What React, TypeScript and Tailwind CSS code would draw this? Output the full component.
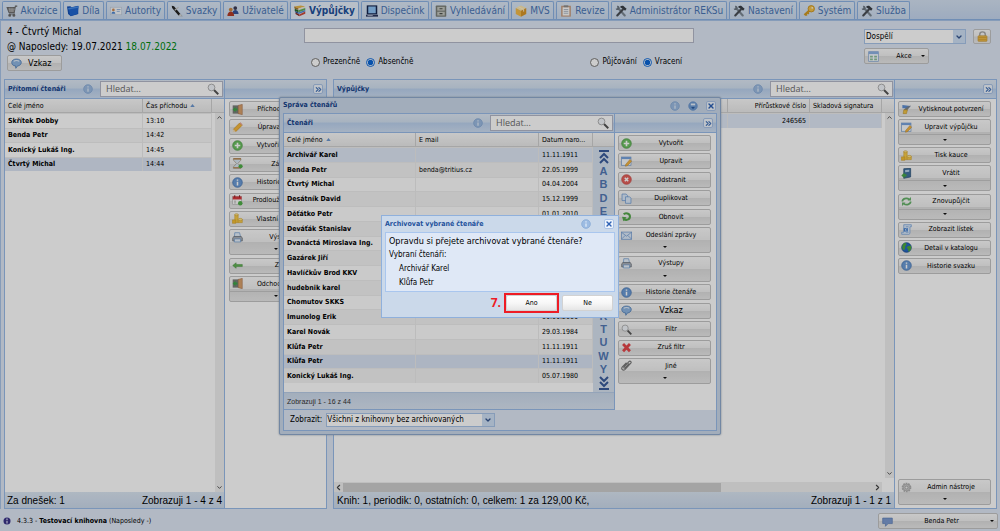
import React from "react";
import { ChevronDown, ChevronLeft, ChevronRight, ChevronsRight, ChevronUp, X } from "lucide-react";

const glyphs: Record<string, React.ReactNode> = {
  cart: (
    <g fill="none" stroke="#6d6d6d" strokeWidth="1.4">
      <path d="M15 1.500h-2.500L11 10H4L1.500 3.500H12" fill="#8c8c8c" />
      <path d="M4 5.500h8M5 8h6M5 3.500v6M8 3.500v6" stroke="#d0d0d0" strokeWidth="0.6" />
      <path d="M4 12h8" />
      <circle cx="5" cy="13.500" r="1.300" fill="#555" />
      <circle cx="10.500" cy="13.500" r="1.300" fill="#555" />
    </g>
  ),
  folder: (
    <g>
      <path d="M0 2l4.500-.5L6 3l9-2v11L5 15 1.500 12z" fill="#1550b4" />
      <path d="M1.500 4L15.500 1.500 14 12 4.500 14.500z" fill="#1e66d0" />
      <path d="M1.500 4L15.500 1.500l-.3 2L2 6z" fill="#4b8fe8" />
    </g>
  ),
  card: (
    <g>
      <rect x="0.500" y="3" width="15" height="10" fill="#f2f5f9" stroke="#c3cedd" />
      <circle cx="4.500" cy="6.500" r="1.800" fill="#d08b52" />
      <path d="M2 11.500c0-3.500 5-3.500 5 0z" fill="#4c86d0" />
      <path d="M9 6h5M9 8.500h4" stroke="#7aa0d4" />
    </g>
  ),
  pen: (
    <g>
      <path d="M1 1l3 .5 8.500 10.500-2.500 2L1.500 4z" fill="#222" />
      <path d="M10 14l2.500-2L15 15z" fill="#f3f3f3" stroke="#888" strokeWidth="0.5" />
      <path d="M5 7l5-4" stroke="#c8c8c8" strokeWidth="1.500" />
    </g>
  ),
  users: (
    <g>
      <circle cx="11" cy="4" r="2.500" fill="#3d3d57" />
      <path d="M7 12c0-7 8-7 8.500 0z" fill="#35549c" />
      <circle cx="5" cy="6" r="2.500" fill="#c98643" />
      <path d="M.5 14.500c0-8 9-8 9 0z" fill="#b23b26" />
    </g>
  ),
  books: (
    <g>
      <path d="M0 2l9-1.500 6 1.500-9 2.500z" fill="#e8b64a" />
      <path d="M0 2l6 2.500v2L1 5z" fill="#a8742a" />
      <path d="M6 4.500L15 2v2L6 7z" fill="#f0e8d8" />
      <path d="M1 5l5 2v2.500L1 8z" fill="#2d6b2d" />
      <path d="M6 7l9-3v2.500L6 9.500z" fill="#62b05a" />
      <path d="M1 8l5 2v2l-4-2z" fill="#23508f" />
      <path d="M6 10l9-3.500v2L6 12z" fill="#4f8ad6" />
      <path d="M2 10l5 2.500V15l-5-3z" fill="#8a2a20" />
      <path d="M7 12.500l8-4v3L7 15z" fill="#cb4a3a" />
    </g>
  ),
  monitor: (
    <g>
      <rect x="1" y="0.500" width="14" height="12" fill="#16264f" />
      <rect x="3" y="2" width="10" height="9" fill="#8fc4f5" />
      <path d="M0 13h16v2.500H0z" fill="#2a355c" />
      <path d="M2 14h7" stroke="#c9d2ea" />
    </g>
  ),
  cabinet: (
    <g>
      <rect x="1" y="0.500" width="14" height="15" rx="1" fill="#7b7f78" />
      <rect x="3" y="2.500" width="10" height="5" fill="#c3c6bf" />
      <rect x="3" y="9" width="10" height="5" fill="#c3c6bf" />
      <path d="M6 5h4M6 11.500h4" stroke="#4d504b" strokeWidth="1.500" />
    </g>
  ),
  cube: (
    <g>
      <path d="M8 .5l7 3.500-7 3.500L1 4z" fill="#fce7b0" />
      <path d="M1 4l7 3.500v8L1 12z" fill="#f3bb4a" />
      <path d="M15 4L8 7.500v8l7-3.500z" fill="#d8962a" />
      <path d="M4.500 2.300l7 3.500v3" stroke="#fff3d0" strokeWidth="1.200" fill="none" />
    </g>
  ),
  clipboard: (
    <g>
      <rect x="1.500" y="1" width="13" height="14.500" fill="#c9a084" />
      <rect x="3.500" y="3" width="9" height="11" fill="#fafafa" />
      <rect x="5" y="0.500" width="6" height="2.500" fill="#8d8d8d" />
      <path d="M5 6h6M5 8.500h6M5 11h6" stroke="#9aa6b5" />
    </g>
  ),
  tools: (
    <g strokeLinecap="round">
      <path d="M4 4l9 10" stroke="#7d8994" strokeWidth="2.800" />
      <path d="M1 4.500C1 7.500 5 7.500 6 5S4 0 2.500 1.500L4 3.500 3 4.500z" fill="#6c7681" />
      <path d="M10.500 6L3 14" stroke="#4a4f57" strokeWidth="2.800" />
      <path d="M6.500 2.500C9 0 12 1 13 3l2.500 2-2 2.500L10 5z" fill="#3a3f47" />
    </g>
  ),
  key: (
    <g>
      <path d="M8.500 7.500L2 13.500" stroke="#d19a22" strokeWidth="3.200" />
      <path d="M3.500 12l2 2M6 10l2 2" stroke="#d19a22" strokeWidth="1.500" />
      <circle cx="11" cy="5" r="4.300" fill="#f3c14a" stroke="#c28812" />
      <circle cx="12.300" cy="3.700" r="1.200" fill="#fff6dc" />
    </g>
  ),
  bubble: (
    <g>
      <path d="M8 1.500c4 0 7 2 7 5s-3 5-5.500 5L7 15l-.5-3.500C3 11.500 1 9 1 6.500c0-3 3-5 7-5z" fill="#8fb6e2" stroke="#4677b3" />
      <path d="M4 5c2-2 6-2 8 0" stroke="#e3effb" strokeWidth="1.500" fill="none" />
    </g>
  ),
  chat: <path d="M1 3h14v8H9l-4 4v-4H1z" fill="#7d9cd0" stroke="#5f80b8" />,
  info: (
    <g>
      <circle cx="8" cy="8" r="7" fill="#6c9cd6" stroke="#4272b0" />
      <path d="M8 3.500v2M8 7v5.500" stroke="#fff" strokeWidth="2.200" />
    </g>
  ),
  infoPale: (
    <g>
      <circle cx="8" cy="8" r="7" fill="#9cbbe2" stroke="#7fa3d2" />
      <path d="M8 3.500v2M8 7v5.500" stroke="#dbe8f7" strokeWidth="2.200" />
    </g>
  ),
  help: (
    <g>
      <circle cx="8" cy="8" r="7" fill="#6f9bd3" stroke="#6f98cf" />
      <path d="M4.500 4h7v3h-7z" fill="#e5effa" />
      <path d="M5 9.500h6L8 13z" fill="#2c5ca0" />
    </g>
  ),
  search: (
    <g>
      <path d="M9 9l6 6" stroke="#555" strokeWidth="2.600" />
      <circle cx="6" cy="6" r="4.500" fill="#f2f6fa" stroke="#aaa" strokeWidth="1.200" />
    </g>
  ),
  door: (
    <g>
      <path d="M1 2h9v12H1z" fill="#7b7f7b" />
      <path d="M9 2l6-1.500v15L9 14z" fill="#d9a06c" stroke="#99603a" strokeWidth="0.6" />
      <path d="M8 6.500H5V4L1 8l4 4V9.500h3z" fill="#3fa648" />
    </g>
  ),
  pencil: (
    <g>
      <path d="M11 1.500L14.500 5 5.500 14 2 10.500z" fill="#f5b83d" stroke="#c68618" strokeWidth="0.8" />
      <path d="M2 10.500L5.500 14 1 15z" fill="#f2ddb8" />
      <path d="M11 1.500l1.500-1L15.500 4l-1 1z" fill="#e9a08a" />
    </g>
  ),
  plus: (
    <g>
      <circle cx="8" cy="8" r="7" fill="#6cc062" stroke="#4c9a45" />
      <path d="M8 4v8M4 8h8" stroke="#fff" strokeWidth="2.400" />
    </g>
  ),
  hourglass: (
    <g>
      <path d="M2 1h11v2L8.500 8 13 13v2H2v-2l4.500-5L2 3z" fill="#d9e6f2" stroke="#a39a88" />
      <path d="M2 .5h11V2H2zM2 13.500h11V15H2z" fill="#b47c3c" />
      <circle cx="12.500" cy="12" r="3" fill="#4fae48" />
    </g>
  ),
  calendar: (
    <g>
      <rect x="1" y="2" width="13" height="12" fill="#fbfbfb" stroke="#b5b5b5" />
      <path d="M1 2h13v4.500H1z" fill="#d83a3f" />
      <path d="M4 .5v3M11 .5v3" stroke="#8c2024" strokeWidth="1.500" />
      <path d="M3 9h3M3 11.500h3" stroke="#999" />
      <circle cx="12" cy="12" r="3.300" fill="#4fae48" />
    </g>
  ),
  coins: (
    <g stroke="#cf9a22" strokeWidth="0.7">
      <path d="M4 2.500h5V14H4z" fill="#f8cc4a" />
      <ellipse cx="6.500" cy="2.500" rx="2.600" ry="1.500" fill="#fde58d" />
      <path d="M.5 10h5v5h-5z" fill="#f3bd33" />
      <path d="M9 9.500h6V14H9z" fill="#f8cc4a" />
      <ellipse cx="12" cy="9.500" rx="3" ry="1.700" fill="#fde58d" />
    </g>
  ),
  printer: (
    <g>
      <path d="M4 1h7l1.500 6h-9z" fill="#e6f1fc" stroke="#6d9ad0" />
      <path d="M2.500 6.500h11L15 9v4H1V9z" fill="#aab0b8" stroke="#666d77" />
      <path d="M3.500 10h9v4.500h-9z" fill="#e8f1fa" stroke="#6d9ad0" />
    </g>
  ),
  arrow: <path d="M1 8l5-4v2.500h9v3H6V12z" fill="#62b354" stroke="#4a9040" strokeWidth="0.700" />,
  edit: (
    <g>
      <rect x="0.500" y="1.500" width="14" height="12" fill="#f7fafd" stroke="#6f96c9" />
      <path d="M.5 1.500h14v3H.5z" fill="#77a3dd" />
      <path d="M13 5l2.500 2.500-6 6.500-3 1 .5-3z" fill="#f3b542" stroke="#b77d1d" strokeWidth="0.6" />
    </g>
  ),
  remove: (
    <g>
      <circle cx="8" cy="8" r="7" fill="#e5625c" stroke="#c94b46" />
      <path d="M5.500 5.500l5 5M10.500 5.500l-5 5" stroke="#fff" strokeWidth="2.200" />
    </g>
  ),
  copy: (
    <g fill="#dceafb" stroke="#6595d1">
      <path d="M1.500 1.500h6l2 2V11h-8z" />
      <path d="M6.500 5.500h6l2 2V15h-8z" />
    </g>
  ),
  refresh: (
    <g>
      <path d="M4 5c2-3 9-2 9 3s-6 6-9 3.500" fill="none" stroke="#55a84c" strokeWidth="3" />
      <path d="M8 9L1.500 8.500l2 6.500z" fill="#55a84c" />
    </g>
  ),
  mail: (
    <g>
      <rect x="0.500" y="3" width="15" height="10.500" fill="#dceafb" stroke="#6c97cf" />
      <path d="M1 3.500l7 5.500 7-5.500M1 13l5-5M15 13l-5-5" fill="none" stroke="#6c97cf" />
    </g>
  ),
  cross: <path d="M3 3l10 10.500M13 3L3 13.500" stroke="#e5484c" strokeWidth="4" />,
  clip: <path d="M12 5l-6 6.500c-1 1-2.500 0-1.500-1.500l7-7.500c2-2 4.500.5 2.500 2.500l-8 8.500c-3 3-6.500-.5-4-3.500L8 4" fill="none" stroke="#777" strokeWidth="1.600" />,
  brush: (
    <g>
      <path d="M2 1.500l12 1.500-3 3H2z" fill="#5e8fd4" />
      <path d="M14.500 2L8 10l-4-2 5-4z" fill="#7e858f" />
      <path d="M4 8.500h5.500L8 14H3z" fill="#f0c347" stroke="#ad8219" strokeWidth="0.600" />
    </g>
  ),
  book: (
    <g>
      <path d="M4 1l10-.5V13l-10 2z" fill="#41729f" stroke="#274e74" />
      <path d="M6 3l6-.5v3L6 6z" fill="#b6d0e8" />
      <path d="M8 9H5V6.500L.5 11 5 15v-2.500h3z" fill="#49a846" />
    </g>
  ),
  recycle: (
    <g fill="none" stroke="#66b269" strokeWidth="2.500">
      <path d="M2 8c0-4 6-6 10-3" />
      <path d="M14 8c0 4-6 6-10 3" />
      <path d="M9.500 6.500h5V1.500zM6.500 9.500h-5v5z" fill="#66b269" stroke="none" />
    </g>
  ),
  scroll: (
    <g>
      <path d="M4 1h11v3h-2v9c0 2-2 2.500-3 2H1v-3h3z" fill="#dceafb" stroke="#6f9dd9" />
      <path d="M7 4h4M7 12h4" stroke="#6f9dd9" />
      <path d="M4 6h6v5H4z" fill="#4a84d0" />
      <path d="M8 7L6 8.500 8 10" fill="none" stroke="#fff" />
    </g>
  ),
  globe: (
    <g>
      <circle cx="8" cy="8" r="7" fill="#2768c4" stroke="#174585" />
      <path d="M4 2c3-1 4 0 4 2L6 6v3l-1.500 3C1 10 1 5 4 2zM10 6l4-1c2 4 0 8-3 9l-1-4-2-2z" fill="#4dab3c" />
    </g>
  ),
  gear: (
    <g>
      <circle cx="8" cy="8" r="5.800" fill="#c9c9c9" stroke="#b0b0b0" strokeWidth="2.500" strokeDasharray="2.300 1.340" />
      <circle cx="8" cy="8" r="4.800" fill="#c9c9c9" stroke="#a8a8a8" strokeWidth="0.700" />
      <circle cx="8" cy="8" r="2" fill="#f3f3f3" stroke="#999" />
    </g>
  ),
  lock: (
    <g>
      <path d="M4 8V5c0-5 8-5 8 0v3" fill="none" stroke="#a5a5a5" strokeWidth="2" />
      <rect x="1.500" y="7" width="13" height="8" rx="1" fill="#f0bd4a" stroke="#c99a3a" />
      <path d="M2 9.500h12M2 12.500h12" stroke="#d59e2b" />
    </g>
  ),
  sheet: (
    <g>
      <rect x="1" y="1" width="14" height="14" fill="#f4f9ff" stroke="#80a4d4" />
      <path d="M1 1h14v3.500H1z" fill="#8fb3e4" />
      <path d="M3 7h4v2.500H3zM9 7h4v2.500H9zM3 11h4v2.500H3zM9 11h4v2.500H9z" fill="#8cbf9a" />
    </g>
  ),
  orb: (
    <g>
      <circle cx="8" cy="8" r="7" fill="#3a3288" />
      <path d="M8 3v3M8 7.500V13" stroke="#d5d2f2" strokeWidth="2.500" />
    </g>
  ),
};

function Icon({ name, className = "size-[11px]" }: { name: string; className?: string }) {
  return (
    <svg viewBox="0 0 16 16" aria-hidden="true" className={`shrink-0 ${className}`}>
      {glyphs[name]}
    </svg>
  );
}

function Caret() {
  return (
    <svg viewBox="0 0 4 2" aria-hidden="true" className="h-[2px] w-[4px] shrink-0">
      <path d="M0 0h4L2 2z" fill="#111" />
    </svg>
  );
}

const face =
  "rounded-[2px] border border-[#c3c3c3] bg-[linear-gradient(#fbfbfb,#f0f0f0_48%,#dedede_52%,#e9e9e9)] text-black";
const bar = "bg-[linear-gradient(#dfe9f5,#d2e0f1_45%,#bbd1ee_50%,#cfdff3)]";

type Action = { icon: string; label: string; kind?: "menu" | "split"; large?: boolean };

function ActionButton({ icon, label, kind, large }: Action) {
  return (
    <button type="button" className={`flex w-full flex-col ${face} ${kind ? "h-[26px]" : "h-4"}`}>
      <span className="flex h-[14px] w-full items-center pl-[2px]">
        <Icon name={icon} />
        <span className={`flex-1 text-center whitespace-nowrap ${large ? "text-[9px]" : ""}`}>{label}</span>
      </span>
      {kind && (
        <span
          className={`flex h-[10px] w-full items-center justify-center ${kind === "split" ? "border-t border-[#c6c6c6]" : ""}`}
        >
          <Caret />
        </span>
      )}
    </button>
  );
}

function SearchBox({ label }: { label: string }) {
  return (
    <div className="flex h-4 w-[123px] shrink-0 items-center border border-[#b5b8c8] bg-white pr-[3px]">
      <input
        type="text"
        aria-label={label}
        placeholder="Hledat..."
        className="min-w-0 flex-1 pl-[5px] font-['Open_Sans'] text-[9px] leading-3 outline-none placeholder:text-[#6b6b6b]"
      />
      <Icon name="search" className="size-3" />
    </div>
  );
}

function Collapse() {
  return (
    <button type="button" aria-label="Sbalit" className="flex size-[10px] items-center justify-center rounded-[2px] border border-[#a9c2e6] bg-[#eef4fc] text-[#4272b8]">
      <ChevronsRight size={9} strokeWidth={3} className="shrink-0" />
    </button>
  );
}

function PanelTitle({ title }: { title: string }) {
  return (
    <div className={`flex h-[19px] items-center border-b border-[#99bbe8] pr-px ${bar}`}>
      <h2 className="flex-1 pl-[3px] text-[7px] font-bold text-[#15428b]">{title}</h2>
      <Icon name="infoPale" className="mr-[7px] size-[10px]" />
      <SearchBox label={title} />
    </div>
  );
}

function SideTitle() {
  return (
    <div className={`flex h-[19px] items-center justify-end border-b border-[#99bbe8] pr-[3px] ${bar}`}>
      <Collapse />
    </div>
  );
}

function SortMark() {
  return (
    <svg viewBox="0 0 6 4" aria-hidden="true" className="ml-[3px] inline-block h-[3px] w-[5px] align-middle">
      <path d="M3 0l3 4H0z" fill="#6c97cf" />
    </svg>
  );
}

const th =
  "h-[14px] border-r border-b border-r-[#d0d0d0] border-b-[#d0d0d0] bg-[linear-gradient(#fafafa,#eaeaea)] px-[3px] text-left leading-3 font-normal whitespace-nowrap";
const td = "border-t border-t-[#ededed] border-r border-r-[#ececec] px-[3px] leading-3 whitespace-nowrap";

const tabs = [
  { icon: "cart", label: "Akvizice", w: "w-[59px]" },
  { icon: "folder", label: "Díla", w: "w-[41px]" },
  { icon: "card", label: "Autority", w: "w-[59px]" },
  { icon: "pen", label: "Svazky", w: "w-[54px]" },
  { icon: "users", label: "Uživatelé", w: "w-[65px]" },
  { icon: "books", label: "Výpůjčky", w: "w-[69px]", active: true },
  { icon: "monitor", label: "Dispečink", w: "w-[68px]" },
  { icon: "cabinet", label: "Vyhledávání", w: "w-[78px]" },
  { icon: "cube", label: "MVS", w: "w-[43px]" },
  { icon: "clipboard", label: "Revize", w: "w-[53px]" },
  { icon: "tools", label: "Administrátor REKSu", w: "w-[116px]" },
  { icon: "tools", label: "Nastavení", w: "w-[68px]" },
  { icon: "key", label: "Systém", w: "w-[56px]" },
  { icon: "tools", label: "Služba", w: "w-[53px]" },
];

const present = [
  ["Skřítek Dobby", "13:10"],
  ["Benda Petr", "14:42"],
  ["Konický Lukáš Ing.", "14:45"],
  ["Čtvrtý Michal", "14:44"],
];

const presentActions: Action[] = [
  { icon: "door", label: "Příchod čtenáře" },
  { icon: "pencil", label: "Úprava čtenáře" },
  { icon: "plus", label: "Vytvořit čtenáře" },
  { icon: "hourglass", label: "Záloha" },
  { icon: "info", label: "Historie čtenáře" },
  { icon: "calendar", label: "Prodloužit platnost" },
  { icon: "coins", label: "Vlastní poplatek" },
  { icon: "printer", label: "Výstupy", kind: "menu" },
  { icon: "arrow", label: "Zpět" },
  { icon: "door", label: "Odchod čtenáře", kind: "split" },
];

const loanActions: Action[] = [
  { icon: "brush", label: "Vytisknout potvrzení" },
  { icon: "edit", label: "Upravit výpůjčku", kind: "split" },
  { icon: "coins", label: "Tisk kauce" },
  { icon: "book", label: "Vrátit", kind: "split" },
  { icon: "recycle", label: "Znovupůjčit", kind: "split" },
  { icon: "scroll", label: "Zobrazit lístek" },
  { icon: "globe", label: "Detail v katalogu" },
  { icon: "info", label: "Historie svazku" },
];

const readers = [
  ["Archivář Karel", "", "11.11.1911"],
  ["Benda Petr", "benda@tritius.cz", "22.05.1999"],
  ["Čtvrtý Michal", "", "04.04.2004"],
  ["Desátník David", "", "15.12.1999"],
  ["Děťátko Petr", "", "01.01.2010"],
  ["Deváťák Stanislav", "", ""],
  ["Dvanáctá Miroslava Ing.", "", ""],
  ["Gazárek Jiří", "", ""],
  ["Havlíčkův Brod KKV", "", ""],
  ["hudebnik karel", "", ""],
  ["Chomutov SKKS", "", ""],
  ["Imunolog Erik", "", "01.01.2001"],
  ["Karel Novák", "", "29.03.1984"],
  ["Klůfa Petr", "", "11.11.1911"],
  ["Klůfa Petr", "", "11.11.1911"],
  ["Konický Lukáš Ing.", "", "05.07.1980"],
];

const readerActions: Action[] = [
  { icon: "plus", label: "Vytvořit" },
  { icon: "edit", label: "Upravit" },
  { icon: "remove", label: "Odstranit" },
  { icon: "copy", label: "Duplikovat" },
  { icon: "refresh", label: "Obnovit" },
  { icon: "mail", label: "Odeslání zprávy", kind: "menu" },
  { icon: "printer", label: "Výstupy", kind: "menu" },
  { icon: "info", label: "Historie čtenáře" },
  { icon: "bubble", label: "Vzkaz", large: true },
  { icon: "search", label: "Filtr" },
  { icon: "cross", label: "Zruš filtr" },
  { icon: "clip", label: "Jiné", kind: "menu" },
];

const letters = ["A", "B", "D", "E", "G", "H", "I", "K", "M", "N", "P", "R", "T", "U", "W", "Y"];

function Radio({ name, label, checked }: { name: string; label: string; checked?: boolean }) {
  return (
    <label className="flex items-center gap-[3px] text-[8px]">
      <input type="radio" name={name} defaultChecked={checked} className="size-[9px] accent-[#0a66d8]" />
      {label}
    </label>
  );
}

function TopArrow({ down }: { down?: boolean }) {
  return (
    <svg viewBox="0 0 10 14" aria-hidden="true" className={`h-[14px] w-[10px] ${down ? "rotate-180" : ""}`}>
      <path d="M0 1h10M1 8l4-4 4 4M1 13l4-4 4 4" fill="none" stroke="#3a5c9c" strokeWidth="2" />
    </svg>
  );
}

function CloseButton() {
  return (
    <button type="button" aria-label="Zavřít" className="flex size-[10px] items-center justify-center rounded-[2px] border border-[#a9c2e6] bg-[#eef4fc] text-[#2f62b5]">
      <X size={8} strokeWidth={4} className="shrink-0" />
    </button>
  );
}

function PresentReaders() {
  return (
    <section className="flex w-[323px] shrink-0 border border-[#99bbe8]">
      <div className="flex min-w-0 flex-1 flex-col border-r border-[#99bbe8]">
        <PanelTitle title="Přítomní čtenáři" />
        <div className="flex flex-1 bg-white">
          <div className="min-w-0 flex-1 bg-white">
            <table className="h-[72px] w-full table-fixed border-separate border-spacing-0">
              <thead>
                <tr>
                  <th className={th}>Celé jméno</th>
                  <th className={`w-[69px] ${th}`}>Čas příchodu<SortMark /></th>
                </tr>
              </thead>
              <tbody>
                {present.map(([name, time], i) => (
                  <tr key={name} className={i === 3 ? "bg-[#dbe4f3]" : i % 2 ? "bg-[#f7f7f7]" : ""}>
                    <td className={`font-bold ${td}`}>{name}</td>
                    <td className={td}>{time}</td>
                  </tr>
                ))}
              </tbody>
            </table>
          </div>
          <div className="flex w-3 flex-col">
            <div className="h-[14px] border-b border-[#d0d0d0] bg-[linear-gradient(#fafafa,#eaeaea)]" />
            <div className="ml-[3px] flex flex-1 flex-col items-center justify-between bg-[#efefef] py-px text-[#444]">
              <ChevronUp size={7} strokeWidth={3} />
              <ChevronDown size={7} strokeWidth={3} />
            </div>
          </div>
        </div>
        <div className="flex h-4 items-center justify-between bg-[linear-gradient(#dbe6f3,#ccdaec)] px-[2px] font-['Liberation_Sans'] text-[10px]">
          <span>Za dnešek: 1</span>
          <span>Zobrazuji 1 - 4 z 4</span>
        </div>
      </div>
      <div className="flex w-[101px] flex-col">
        <SideTitle />
        <div className="flex-1 bg-white px-[4px] pt-[2px]">
          <div className="flex h-[201px] flex-col justify-between">
            {presentActions.map((a) => <ActionButton key={a.label} {...a} />)}
          </div>
        </div>
      </div>
    </section>
  );
}

function Loans() {
  return (
    <section className="flex min-w-0 flex-1 border border-[#99bbe8]">
      <div className="flex min-w-0 flex-1 flex-col border-r border-[#99bbe8]">
        <PanelTitle title="Výpůjčky" />
        <div className="flex flex-1 bg-white">
          <div className="flex min-w-0 flex-1 flex-col">
            <table className="h-[29px] w-full table-fixed border-separate border-spacing-0">
              <thead>
                <tr>
                  <th className={th} />
                  <th className={`w-[82px] ${th}`}><span className="block text-right">Přírůstkové číslo</span></th>
                  <th className={`w-[72px] ${th}`}>Skladová signatura</th>
                </tr>
              </thead>
              <tbody>
                <tr className="bg-[#dfe8f6]">
                  <td className={td} />
                  <td className={td}><span className="block text-right">246565</span></td>
                  <td className={td} />
                </tr>
              </tbody>
            </table>
            <div className="flex-1" />
            <div className="flex h-[10px] items-center bg-[#efefef] text-[#444]">
              <ChevronLeft size={9} strokeWidth={3} className="shrink-0" />
              <div className="h-[9px] w-[69%] bg-[#cdcdcd]" />
              <ChevronRight size={9} strokeWidth={3} className="ml-auto shrink-0" />
            </div>
          </div>
          <div className="flex w-3 flex-col">
            <div className="h-[14px] border-b border-[#d0d0d0] bg-[linear-gradient(#fafafa,#eaeaea)]" />
            <div className="mb-[14px] ml-[3px] flex flex-1 flex-col items-center justify-between bg-[#efefef] py-px text-[#444]">
              <ChevronUp size={7} strokeWidth={3} />
              <ChevronDown size={7} strokeWidth={3} />
            </div>
          </div>
        </div>
        <div className="flex h-4 items-center justify-between bg-[linear-gradient(#dbe6f3,#ccdaec)] px-[3px] font-['Liberation_Sans'] text-[10px]">
          <span>Knih: 1, periodik: 0, ostatních: 0, celkem: 1 za 129,00 Kč,</span>
          <span>Zobrazuji 1 - 1 z 1</span>
        </div>
      </div>
      <div className="flex w-[101px] flex-col">
        <SideTitle />
        <div className="flex flex-1 flex-col justify-between bg-white pt-[2px] pr-[5px] pb-[3px] pl-[3px]">
          <div className="flex h-[173px] flex-col justify-between">
            {loanActions.map((a) => <ActionButton key={a.label} {...a} />)}
          </div>
          <ActionButton icon="gear" label="Admin nástroje" kind="menu" />
        </div>
      </div>
    </section>
  );
}

function ReadersWindow() {
  return (
    <section
      role="dialog"
      aria-label="Správa čtenářů"
      className="absolute top-[97px] left-1/2 flex w-[442px] -translate-x-1/2 flex-col rounded-[2px] border border-[#8fa9cc] bg-[#cbd9ea] px-[3px] pb-[3px] shadow-[0_0_2px_#8a97a8]"
    >
      <header className="flex h-[15px] items-center gap-2 pr-px">
        <h2 className="flex-1 text-[7px] font-bold text-[#15428b]">Správa čtenářů</h2>
        <Icon name="infoPale" className="size-[10px]" />
        <Icon name="help" className="size-[10px]" />
        <CloseButton />
      </header>
      <div className="border border-[#99bbe8] bg-[#dfe8f6]">
        <div className="flex">
          <div className="flex min-w-0 flex-1 flex-col border-r border-b border-[#99bbe8]">
            <PanelTitle title="Čtenáři" />
            <div className="flex bg-white">
              <div className="min-w-0 flex-1">
                <table className="h-[250px] w-full table-fixed border-separate border-spacing-0">
                  <thead>
                    <tr>
                      <th className={th}>Celé jméno<SortMark /></th>
                      <th className={`w-[123px] ${th}`}>E mail</th>
                      <th className={`w-[54px] ${th}`}>Datum naro...</th>
                    </tr>
                  </thead>
                  <tbody>
                    {readers.map(([name, mail, born], i) => (
                      <tr
                        key={i}
                        className={i === 0 ? "bg-[#dfe8f6]" : i === 14 ? "bg-[#d9e3f3]" : i % 2 ? "bg-[#f3f3f3]" : "bg-[#fdfdfd]"}
                      >
                        <td className={`font-bold ${td}`}>{name}</td>
                        <td className={td}>{mail}</td>
                        <td className={td}>{born}</td>
                      </tr>
                    ))}
                  </tbody>
                </table>
              </div>
              <div className="flex w-[21px] flex-col">
                <div className="h-[14px] border-b border-[#d0d0d0] bg-[linear-gradient(#fafafa,#eaeaea)]" />
                <nav
                  aria-label="Abeceda"
                  className="flex h-[245px] flex-col items-center justify-between bg-[#d8e3f1] pt-[3px] pb-[2px] font-['Liberation_Sans'] text-[11px] leading-3 font-bold text-[#5379b5]"
                >
                  <TopArrow />
                  {letters.map((l) => <a key={l} href={`#${l}`} className="block">{l}</a>)}
                  <TopArrow down />
                </nav>
              </div>
            </div>
            <div className="flex h-[17px] items-center border-t border-[#b9cde8] bg-[linear-gradient(#ccdaec,#d9e4f2)] pl-[3px] font-['Liberation_Sans'] text-[7px] text-[#333]">
              <span className="pt-[2px]">Zobrazuji 1 - 16 z 44</span>
            </div>
          </div>
          <div className="flex w-[101px] flex-col bg-white">
            <SideTitle />
            <div className="pt-[2px] pr-[5px] pl-[3px]">
              <div className="flex h-[249px] flex-col justify-between">
                {readerActions.map((a) => <ActionButton key={a.label} {...a} />)}
              </div>
            </div>
          </div>
        </div>
        <div className="flex h-5 items-center gap-1 pl-[6px] text-[8px]">
          <label htmlFor="scope">Zobrazit:</label>
          <div className="flex h-[14px] w-[169px] border border-[#a8c3e8] bg-white">
            <select id="scope" className="min-w-0 flex-1 appearance-none bg-white text-[8px] outline-none">
              <option>Všichni z knihovny bez archivovaných</option>
            </select>
            <span className="flex w-3 items-center justify-center bg-[#cfe0f6] text-[#35568f]">
              <ChevronDown size={8} strokeWidth={4} />
            </span>
          </div>
        </div>
      </div>
    </section>
  );
}

const answer =
  "block h-4 rounded-[2px] border border-[#d2d2d2] bg-[linear-gradient(#fff,#f7f7f7_50%,#e6e6e6)] w-[51px]";

function ConfirmDialog() {
  return (
    <section
      role="alertdialog"
      aria-label="Archivovat vybrané čtenáře"
      className="absolute top-[215px] left-1/2 flex w-[238px] -translate-x-1/2 flex-col border border-[#8fb0dc] bg-[#cbd9ea] px-[3px] pb-[3px]"
    >
      <header className="flex h-4 items-center gap-[13px] pr-px">
        <h2 className="flex-1 text-[7px] font-bold text-[#24529c]">Archivovat vybrané čtenáře</h2>
        <Icon name="infoPale" className="size-[10px]" />
        <CloseButton />
      </header>
      <div className="border border-[#a9c6ee] bg-[#dfe8f6] px-[3px] py-px text-[8px] leading-[14px]">
        <p className="text-[9px]">Opravdu si přejete archivovat vybrané čtenáře?</p>
        <p>Vybraní čtenáři:</p>
        <ul className="pl-[10px]">
          <li>Archivář Karel</li>
          <li>Klůfa Petr</li>
        </ul>
      </div>
      <footer className="flex h-[22px] items-center justify-end gap-[3px]">
        <span className="font-['Open_Sans'] text-[12px] leading-4 font-bold text-[#ee1c25]">7.</span>
        <span className="border-2 border-[#ee1c25]">
          <button type="button" className={answer}>Ano</button>
        </span>
        <button type="button" className={`mr-[2px] ${answer}`}>Ne</button>
      </footer>
    </section>
  );
}

export default function App() {
  return (
    <div className="relative flex min-h-screen flex-col overflow-hidden bg-[#dfe8f6] font-['DejaVu_Sans_Condensed','Noto_Sans',sans-serif] text-[7px] text-black">
      <nav className="flex h-5 items-end gap-[2px] border-b border-[#8db2e3] bg-[linear-gradient(#d5e2f3,#c5d7ef)] pl-[2px]">
        {tabs.map((t) => (
          <a
            key={t.label}
            href={`#${t.label}`}
            className={`flex h-[18px] shrink-0 items-center justify-center gap-[3px] rounded-t-[2px] border border-b-0 border-[#8db2e3] text-[10px] whitespace-nowrap ${t.w} ${
              t.active ? "bg-[#e6effa] font-bold text-[#1d4f9a]" : "bg-[linear-gradient(#dce8f6,#cbdbf0)] text-[#4a76b5]"
            }`}
          >
            <Icon name={t.icon} className="size-3" />
            {t.label}
          </a>
        ))}
      </nav>
      <main className="flex flex-1 flex-col border-t border-l border-[#a8c4e8] pr-[3px] pl-[3px]">
        <div className="flex h-[58px] items-start justify-between pt-[3px] pr-[6px] pl-[3px]">
          <div className="w-[297px] text-[10px] leading-[15px]">
            <p>4 - Čtvrtý Michal</p>
            <p>@ Naposledy: 19.07.2021 <span className="text-[#008a10]">18.07.2022</span></p>
            <button type="button" className={`mt-px flex h-4 w-[55px] items-center gap-[6px] pl-[3px] text-[9px] leading-3 ${face}`}>
              <Icon name="bubble" />
              Vzkaz
            </button>
          </div>
          <div className="w-[390px] pt-1">
            <input type="text" aria-label="Kód" className="block h-[15px] w-full border border-[#b5b8c8] bg-white text-[10px] outline-none" />
            <div className="flex justify-between pt-[13px] pr-3 pl-[7px]">
              <div className="flex gap-[6px]">
                <Radio name="place" label="Prezenčně" />
                <Radio name="place" label="Absenčně" checked />
              </div>
              <div className="flex gap-[6px]">
                <Radio name="mode" label="Půjčování" />
                <Radio name="mode" label="Vracení" checked />
              </div>
            </div>
          </div>
          <div className="ml-auto w-[127px] pt-[5px]">
            <div className="flex items-center justify-between">
              <div className="flex h-[15px] w-[102px] border border-[#a8c3e8] bg-white">
                <select aria-label="Kategorie" className="min-w-0 flex-1 appearance-none bg-white pl-px text-[8px] outline-none">
                  <option>Dospělí</option>
                </select>
                <span className="flex w-3 items-center justify-center bg-[#cfe0f6] text-[#35568f]">
                  <ChevronDown size={8} strokeWidth={4} />
                </span>
              </div>
              <button type="button" aria-label="Zámek" className={`flex h-[15px] w-[18px] items-center justify-center ${face}`}>
                <Icon name="lock" />
              </button>
            </div>
            <button type="button" className={`mt-1 flex h-4 w-[65px] items-center justify-between px-[3px] ${face}`}>
              <Icon name="sheet" />
              <span className="pl-2">Akce</span>
              <Caret />
            </button>
          </div>
        </div>
        <div className="flex flex-1 gap-[6px]">
          <PresentReaders />
          <Loans />
        </div>
      </main>
      <footer className="flex h-[22px] items-center justify-between pt-[2px] pr-[2px] pl-[3px]">
        <div className="flex items-center gap-[6px]">
          <Icon name="orb" className="size-2" />
          <p>4.3.3 - <b>Testovací knihovna</b> (Naposledy -)</p>
        </div>
        <button type="button" className={`flex h-4 w-[120px] items-center justify-between px-[3px] ${face}`}>
          <Icon name="chat" />
          <span>Benda Petr</span>
          <Caret />
        </button>
      </footer>
      <ReadersWindow />
      <div className="absolute inset-0 bg-black/20" />
      <ConfirmDialog />
    </div>
  );
}
